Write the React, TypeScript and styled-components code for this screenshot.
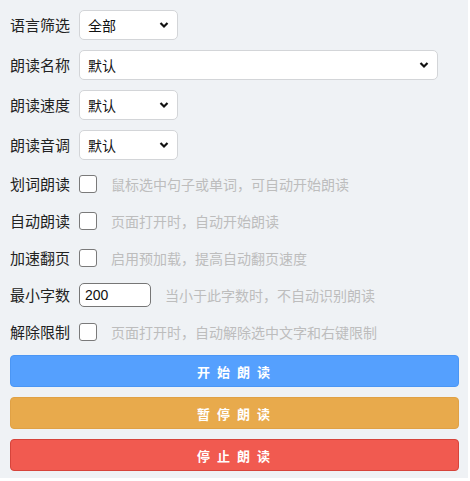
import { useState } from 'react';
import styled, { createGlobalStyle } from 'styled-components';

const GlobalStyle = createGlobalStyle`
  html, body {
    margin: 0;
    padding: 0;
    background: #ffffff;
  }
  body {
    font-family: "Liberation Sans", "Noto Sans CJK SC", sans-serif;
  }
`;

const selectRows = [
  { label: '语言筛选', value: '全部', wide: false },
  { label: '朗读名称', value: '默认', wide: true },
  { label: '朗读速度', value: '默认', wide: false },
  { label: '朗读音调', value: '默认', wide: false },
];

const checkRows = [
  { label: '划词朗读', hint: '鼠标选中句子或单词，可自动开始朗读' },
  { label: '自动朗读', hint: '页面打开时，自动开始朗读' },
  { label: '加速翻页', hint: '启用预加载，提高自动翻页速度' },
];

function Chevron() {
  return (
    <svg width="10" height="8" viewBox="0 0 10 8">
      <polyline
        points="1.5 2 5 5.5 8.5 2"
        stroke="#111"
        strokeWidth="2.2"
        fill="none"
      />
    </svg>
  );
}

function App() {
  const [checked, setChecked] = useState<boolean[]>([false, false, false, false]);
  const [minChars, setMinChars] = useState('200');

  const toggle = (index: number) => {
    setChecked((prev) => prev.map((c, i) => (i === index ? !c : c)));
  };

  return (
    <>
      <GlobalStyle />
      <Panel>
        {selectRows.map((row) => (
          <SelectRow key={row.label}>
            <Label>{row.label}</Label>
            <SelectBox $wide={row.wide}>
              <span>{row.value}</span>
              <Chevron />
            </SelectBox>
          </SelectRow>
        ))}
        <Options>
          {checkRows.map((row, index) => (
            <OptionRow key={row.label}>
              <Label>{row.label}</Label>
              <CheckBox $checked={checked[index]} onClick={() => toggle(index)} />
              <Hint>{row.hint}</Hint>
            </OptionRow>
          ))}
          <OptionRow>
            <Label>最小字数</Label>
            <NumberInput
              value={minChars}
              onChange={(e) => setMinChars(e.target.value)}
            />
            <Hint>当小于此字数时，不自动识别朗读</Hint>
          </OptionRow>
          <OptionRow>
            <Label>解除限制</Label>
            <CheckBox $checked={checked[3]} onClick={() => toggle(3)} />
            <Hint>页面打开时，自动解除选中文字和右键限制</Hint>
          </OptionRow>
        </Options>
        <Buttons>
          <ActionBtn $kind="start">开 始 朗 读</ActionBtn>
          <ActionBtn $kind="pause">暂 停 朗 读</ActionBtn>
          <ActionBtn $kind="stop">停 止 朗 读</ActionBtn>
        </Buttons>
      </Panel>
    </>
  );
}

export default App;

const btnColors = {
  start: { bg: '#55a0fe', border: '#4b96f4' },
  pause: { bg: '#e8aa4c', border: '#e0a145' },
  stop: { bg: '#f15a50', border: '#d6443b' },
};

const Panel = styled.div`
  width: 468px;
  height: 478px;
  box-sizing: border-box;
  background: #eff2f5;
  padding: 10px 9px 0 10px;
  display: flex;
  flex-direction: column;
`;

const SelectRow = styled.div`
  height: 30px;
  display: flex;
  align-items: center;
  margin-bottom: 10px;
`;

const Label = styled.div`
  width: 69px;
  flex-shrink: 0;
  font-size: 15px;
  color: #222;
  font-family: "Noto Sans CJK SC", sans-serif;
  line-height: 20px;
`;

const SelectBox = styled.div<{ $wide: boolean }>`
  width: ${({ $wide }) => ($wide ? '359px' : '99px')};
  height: 30px;
  box-sizing: border-box;
  background: #fff;
  border: 1px solid #d3d5d8;
  border-radius: 5px;
  display: flex;
  align-items: center;
  justify-content: space-between;
  padding: 0 8px 0 8px;
  font-size: 14px;
  color: #111;
  font-family: "Noto Sans CJK SC", sans-serif;
`;

const Options = styled.div`
  display: flex;
  flex-direction: column;
  gap: 9px;
`;

const OptionRow = styled.div`
  height: 28px;
  display: flex;
  align-items: center;
`;

const CheckBox = styled.div<{ $checked: boolean }>`
  width: 18px;
  height: 18px;
  box-sizing: border-box;
  border: 1px solid #7a7a7a;
  border-radius: 3px;
  background: ${({ $checked }) => ($checked ? '#55a0fe' : '#fff')};
  flex-shrink: 0;
  cursor: pointer;
`;

const Hint = styled.span`
  margin-left: 14px;
  font-size: 14px;
  color: #bdbdbd;
  font-family: "Noto Sans CJK SC", sans-serif;
  white-space: nowrap;
`;

const NumberInput = styled.input`
  width: 72px;
  height: 24px;
  box-sizing: border-box;
  border: 1px solid #767676;
  border-radius: 5px;
  padding: 0 5px;
  font-size: 14px;
  font-family: "Liberation Sans", sans-serif;
  color: #111;
  background: #fff;
  outline: none;
`;

const Buttons = styled.div`
  display: flex;
  flex-direction: column;
  gap: 10px;
  margin-top: 9px;
`;

const ActionBtn = styled.button<{ $kind: keyof typeof btnColors }>`
  height: 32px;
  width: 100%;
  border-radius: 4px;
  border: 1px solid ${({ $kind }) => btnColors[$kind].border};
  background: ${({ $kind }) => btnColors[$kind].bg};
  color: #fff;
  font-size: 13px;
  font-weight: bold;
  letter-spacing: 2px;
  font-family: "Noto Sans CJK SC", sans-serif;
  cursor: pointer;
`;
